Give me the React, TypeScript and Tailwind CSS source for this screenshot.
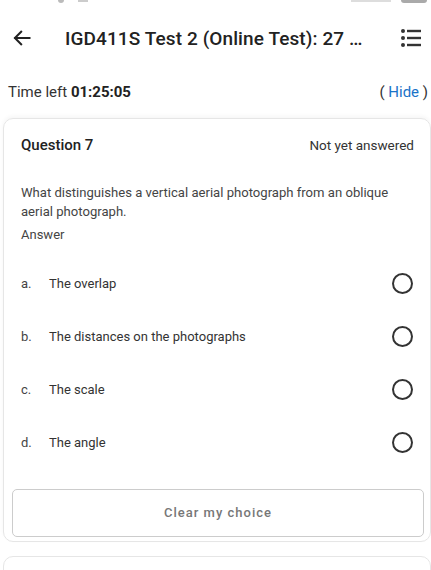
import React from 'react';

const options = [
    { letter: 'a.', text: 'The overlap' },
    { letter: 'b.', text: 'The distances on the photographs' },
    { letter: 'c.', text: 'The scale' },
    { letter: 'd.', text: 'The angle' },
];

export default function App() {
    return (
        <div className="w-[431px] h-[570px] overflow-hidden bg-white text-[#222]" style={{ fontFamily: 'Roboto, "Noto Sans", sans-serif' }}>
            {/* status bar remnants */}
            <div className="h-[14px] relative">
                <div className="absolute left-[58px] top-0 w-[6px] h-[3px] bg-[#bbb] rounded-b-full" />
                <div className="absolute left-[78px] top-0 w-[10px] h-[2px] bg-[#ccc]" />
                <div className="absolute right-[4px] top-0 w-[26px] h-[3px] bg-[#aaa] rounded-b-sm" />
                <div className="absolute right-[40px] top-0 w-[40px] h-[2px] bg-[#ddd]" />
            </div>

            {/* header */}
            <div className="h-[48px] flex items-center">
                <div className="w-[42px] flex justify-center pl-[2px]">
                    <svg width="20" height="20" viewBox="0 0 24 24" fill="none" stroke="#222" strokeWidth="2.4" strokeLinecap="square">
                        <path d="M21 12H4" />
                        <path d="M11 4.5 3.5 12 11 19.5" />
                    </svg>
                </div>
                <div className="flex-1 pl-[23px] text-[19px] font-medium leading-none tracking-[0.1px] whitespace-nowrap">
                    IGD411S Test 2 (Online Test): 27 …
                </div>
                <div className="w-[40px] flex justify-center">
                    <svg width="22" height="20" viewBox="0 0 22 20" fill="#333">
                        <circle cx="3" cy="3" r="2" />
                        <circle cx="3" cy="10" r="2" />
                        <circle cx="3" cy="17" r="2" />
                        <rect x="7" y="1.8" width="14" height="2.4" />
                        <rect x="7" y="8.8" width="14" height="2.4" />
                        <rect x="7" y="15.8" width="14" height="2.4" />
                    </svg>
                </div>
            </div>

            {/* timer */}
            <div className="h-[56px] flex items-center justify-between pl-[8px] pr-[3px] pt-[4px] text-[15px] text-[#333]">
                <div>
                    Time left <span className="font-bold text-[#222]">01:25:05</span>
                </div>
                <div>
                    ( <span className="text-[#1a73c8]">Hide</span> )
                </div>
            </div>

            {/* question card */}
            <div className="ml-[3px] border border-[#e6e6e6] rounded-[10px] shadow-[0_-2px_4px_rgba(0,0,0,0.04)] pl-[17px] pr-[16px] pt-[16px] pb-[4px]">
                <div className="flex items-center justify-between h-[20px]">
                    <div className="text-[15px] font-medium text-[#222]">Question 7</div>
                    <div className="text-[13.5px] text-[#333]">Not yet answered</div>
                </div>

                <div className="mt-[28px] text-[13.1px] leading-[19px] text-[#444]">
                    What distinguishes a vertical aerial photograph from an oblique aerial photograph.
                </div>
                <div className="mt-[5px] text-[13px] leading-[18px] text-[#444]">Answer</div>

                <div className="mt-[13px] flex flex-col">
                    {options.map((o) => (
                        <div key={o.letter} className="h-[53px] flex items-center pr-[1px]">
                            <span className="w-[28px] text-[13px] text-[#444]">{o.letter}</span>
                            <span className="flex-1 text-[13px] text-[#333]">{o.text}</span>
                            <span className="w-[21px] h-[21px] rounded-full border-2 border-[#333]" />
                        </div>
                    ))}
                </div>

                <div className="mt-[20px] -ml-[9px] -mr-[10px] h-[48px] border border-[#ccc] rounded-[5px] flex items-center justify-center text-[13px] font-medium tracking-[1px] text-[#777]">
                    Clear my choice
                </div>
            </div>

            {/* next card */}
            <div className="mt-[14px] ml-[3px] h-[40px] border border-[#e6e6e6] rounded-[10px]" />
        </div>
    );
}
